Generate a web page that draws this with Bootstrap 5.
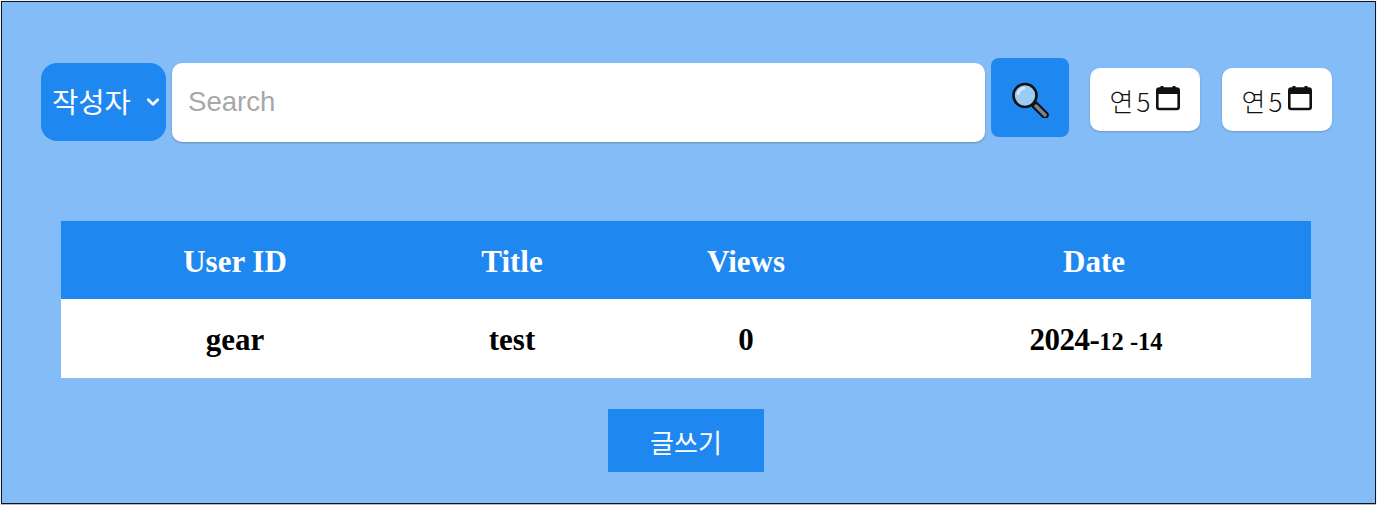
<!DOCTYPE html>
<html lang="ko">
<head>
<meta charset="utf-8">
<title>Board</title>
<link href="https://cdn.jsdelivr.net/npm/bootstrap@5.3.0/dist/css/bootstrap.min.css" rel="stylesheet">
<style>
html,body{height:100%;margin:0;background:#eef2f6;}
.board-frame{box-sizing:border-box;height:503px;margin:1px 1px 0;border:1px solid #10141f;background:#83bcf6;box-shadow:0 1px 0 #b8b8b8;font-family:"Liberation Sans","Noto Sans CJK KR",sans-serif;}
.search-row{padding:56px 43px 0 39px;height:219px;}
.kind-select{width:125px;height:78px;margin-top:5px;flex:none;background-color:#1e88f0;color:#fff;border:0;border-radius:16px;font-size:28.6px;padding:3px 0 0 11px;font-family:"Liberation Sans","Noto Sans CJK KR",sans-serif;box-shadow:none;background-position:right 3px center;background-size:20px 15px;background-image:url("data:image/svg+xml,%3csvg xmlns='http://www.w3.org/2000/svg' viewBox='0 0 16 16'%3e%3cpath fill='none' stroke='%23fff' stroke-linecap='round' stroke-linejoin='round' stroke-width='3' d='m3 5 5 5 5-5'/%3e%3c/svg%3e");}
.query-input{height:79px;margin:5px 0 0 6px;border:0;border-radius:10px;font-size:27.6px;padding:0 16px 2px;box-shadow:0 1px 2px rgba(0,0,0,.25);}
.query-input::placeholder{color:#a8a8a8;}
.go-btn{width:78px;height:79px;margin-left:6px;flex:none;background:#1e88f0;border:0;border-radius:8px;padding:0;}
.date-box{width:110px;height:63px;margin-top:10px;flex:none;background:#fff;border:0;border-radius:10px;font-size:26px;color:#111;box-shadow:0 1px 2px rgba(0,0,0,.2);gap:3px;padding:1px 0 0;font-family:"Noto Sans CJK KR","Liberation Sans",sans-serif;font-weight:300;letter-spacing:3px;}
.date-box svg{margin-top:-2px;}
.date-first{margin-left:21px;}
.date-second{margin-left:22px;}
.list-wrap{padding:0 64px 0 59px;}
.list-table{width:1250px;table-layout:fixed;margin:0;font-family:"Liberation Serif","Noto Sans CJK KR",serif;font-size:31px;font-weight:700;text-align:center;}
.list-table th,.list-table td{padding:4px 0 0;vertical-align:middle;border:0;}
.list-table thead th{height:78px;background:#1e88f0;color:#fff;}
.list-table tbody td{height:79px;background:#fff;color:#000;}
.c1{width:348px}.c2{width:206px}.c3{width:262px}.c4{width:434px}
.list-table tbody td.date-cell{padding-left:4px;}
.year-part{letter-spacing:-.5px;}
.tiny{font-size:24.5px;}
.write-row{padding:31px 5px 0 0;}
.write-btn{width:156px;height:63px;background:#1e88f0;border:0;border-radius:0;color:#fff;font-size:26px;padding:2px 0 0;font-family:"Noto Sans CJK KR","Liberation Sans",sans-serif;font-weight:400;}
</style>
</head>
<body>
<div class="board-frame">
  <div class="search-row d-flex align-items-start">
    <select class="form-select kind-select"><option>작성자</option></select>
    <input class="form-control query-input flex-grow-1" type="text" placeholder="Search">
    <button class="btn go-btn d-flex align-items-center justify-content-center" type="button" aria-label="search">
      <svg width="40" height="40" viewBox="0 0 40 40">
        <path d="M25 27 35 37" stroke="#111" stroke-width="7.5" stroke-linecap="round"/>
        <path d="M26 28 35 37" stroke="#74858f" stroke-width="3.5" stroke-linecap="round"/>
        <circle cx="15" cy="17.5" r="11.5" fill="#9ccbf3" stroke="#111" stroke-width="2.6"/>
        <path d="M8 17a7 7 0 0 1 7-7" fill="none" stroke="#d7ecfb" stroke-width="2.4"/>
      </svg>
    </button>
    <div class="date-box date-first d-flex align-items-center justify-content-center">
      <span>연5</span>
      <svg width="24" height="26" viewBox="0 0 24 26"><path d="M6 0v4M18 0v4" stroke="#111" stroke-width="3"/><rect x="1.3" y="2.5" width="21.4" height="20.5" rx="2" fill="#fff" stroke="#111" stroke-width="2.6"/><rect x="1.3" y="2.5" width="21.4" height="5.5" fill="#111"/></svg>
    </div>
    <div class="date-box date-second d-flex align-items-center justify-content-center">
      <span>연5</span>
      <svg width="24" height="26" viewBox="0 0 24 26"><path d="M6 0v4M18 0v4" stroke="#111" stroke-width="3"/><rect x="1.3" y="2.5" width="21.4" height="20.5" rx="2" fill="#fff" stroke="#111" stroke-width="2.6"/><rect x="1.3" y="2.5" width="21.4" height="5.5" fill="#111"/></svg>
    </div>
  </div>
  <div class="list-wrap">
    <table class="table list-table">
      <colgroup><col class="c1"><col class="c2"><col class="c3"><col class="c4"></colgroup>
      <thead><tr><th>User ID</th><th>Title</th><th>Views</th><th>Date</th></tr></thead>
      <tbody><tr><td>gear</td><td>test</td><td>0</td><td class="date-cell"><span class="year-part">2024-</span><span class="tiny">12 -14</span></td></tr></tbody>
    </table>
  </div>
  <div class="write-row text-center">
    <button class="btn write-btn" type="button">글쓰기</button>
  </div>
</div>
<script src="https://cdn.jsdelivr.net/npm/bootstrap@5.3.0/dist/js/bootstrap.bundle.min.js"></script>
</body>
</html>
